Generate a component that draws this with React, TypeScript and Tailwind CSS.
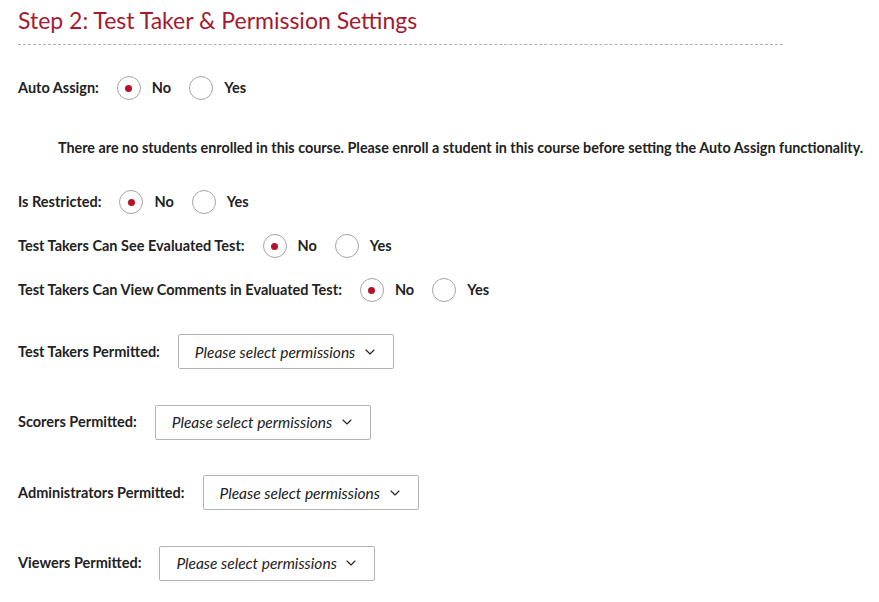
import { ChevronDown } from "lucide-react";

type Choice = "no" | "yes";

function Radio({ checked, label }: { checked: boolean; label: string }) {
  return (
    <label className="flex items-center gap-[11px]">
      <span className="flex h-[24px] w-[24px] items-center justify-center rounded-full border border-[#a3a3a3] bg-white">
        {checked ? <span className="h-[7px] w-[7px] rounded-full bg-[#b5132b]" /> : null}
      </span>
      <span>{label}</span>
    </label>
  );
}

function RadioRow({ label, value = "no" }: { label: string; value?: Choice }) {
  return (
    <div className="flex h-[24px] items-center gap-[18px]">
      <span>{label}</span>
      <Radio checked={value === "no"} label="No" />
      <Radio checked={value === "yes"} label="Yes" />
    </div>
  );
}

function PermissionSelect({ label }: { label: string }) {
  return (
    <div className="flex items-center gap-[18px]">
      <span>{label}</span>
      <button className="flex h-[35px] w-[216px] items-center justify-between rounded-[2px] border border-[#b3b3b3] bg-white pl-[16px] pr-[15px] text-[15.5px] font-normal italic text-[#222]">
        <span>Please select permissions</span>
        <ChevronDown size={16} strokeWidth={1.6} />
      </button>
    </div>
  );
}

export default function App() {
  return (
    <div className="min-h-screen bg-white px-[18px] font-['Lato',sans-serif] text-[14.5px] font-bold leading-[20px] text-[#222]">
      <h2 className="pt-[4px] text-[23px] font-normal leading-[32px] text-[#a6192e]">
        Step 2: Test Taker &amp; Permission Settings
      </h2>
      <div className="mt-[8px] w-[765px] border-t border-dashed border-[#b0b0b0]" />

      <div className="mt-[31px]">
        <RadioRow label="Auto Assign:" />
      </div>

      <p className="mt-[38px] whitespace-nowrap pl-[40px] text-[14.35px]">
        There are no students enrolled in this course. Please enroll a student in this course before setting the Auto Assign functionality.
      </p>

      <div className="mt-[32px] flex flex-col gap-[20px]">
        <RadioRow label="Is Restricted:" />
        <RadioRow label="Test Takers Can See Evaluated Test:" />
        <RadioRow label="Test Takers Can View Comments in Evaluated Test:" />
      </div>

      <div className="mt-[32px] flex flex-col gap-[35.5px]">
        <PermissionSelect label="Test Takers Permitted:" />
        <PermissionSelect label="Scorers Permitted:" />
        <PermissionSelect label="Administrators Permitted:" />
        <PermissionSelect label="Viewers Permitted:" />
      </div>
    </div>
  );
}
